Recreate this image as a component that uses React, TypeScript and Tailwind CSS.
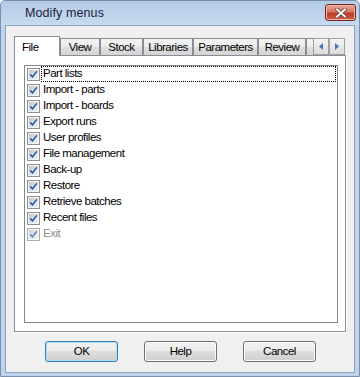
import React from 'react';

// Win7 "basic" style dialog: Modify menus, File tab with a checklist.
const ITEMS = [
  'Part lists',
  'Import - parts',
  'Import - boards',
  'Export runs',
  'User profiles',
  'File management',
  'Back-up',
  'Restore',
  'Retrieve batches',
  'Recent files',
  'Exit',
];

const TABS = [
  { label: 'View', w: 'w-[40px]' },
  { label: 'Stock', w: 'w-[43px]' },
  { label: 'Libraries', w: 'w-[50px]' },
  { label: 'Parameters', w: 'w-[65px]' },
  { label: 'Review', w: 'w-[48px]' },
];

function CheckBox({ disabled }: { disabled?: boolean }) {
  return (
    <svg width="13" height="13" viewBox="0 0 13 13" className={disabled ? 'shrink-0 opacity-75' : 'shrink-0'}>
      <defs>
        <linearGradient id="cbfill" x1="0" y1="0" x2="1" y2="1">
          <stop offset="0" stopColor="#bcc6d2" />
          <stop offset="1" stopColor="#eef1f4" />
        </linearGradient>
      </defs>
      <rect x="0.5" y="0.5" width="12" height="12" fill="#f6f6f6" stroke="#8e8f8f" />
      <rect x="2" y="2" width="9" height="9" fill="url(#cbfill)" />
      <path d="M3.2 6.2 L5.4 8.9 L9.9 3.3" stroke="#f4f6fa" strokeWidth="3" fill="none" strokeLinejoin="round" />
      <path d="M3.2 6.2 L5.4 8.9 L9.9 3.3" stroke="#2f5aa6" strokeWidth="1.7" fill="none" />
    </svg>
  );
}

function Arrow({ dir }: { dir: 'left' | 'right' }) {
  return (
    <svg width="4" height="7" viewBox="0 0 4 7">
      {dir === 'left' ? (
        <path d="M4 0 L0 3.5 L4 7 Z" fill="#4a6fb5" />
      ) : (
        <path d="M0 0 L4 3.5 L0 7 Z" fill="#4a6fb5" />
      )}
    </svg>
  );
}

function Button({ label, primary }: { label: string; primary?: boolean }) {
  return (
    <button
      className={`w-[73px] h-[21px] rounded-[3px] border text-[11.5px] tracking-[-0.5px] text-black bg-[linear-gradient(#f2f2f2_0%,#ebebeb_50%,#dddddd_50%,#cfcfcf_100%)] ${
        primary ? 'border-[#3c7fb1] shadow-[inset_0_0_0_1px_#a6e3f8]' : 'border-[#707070] shadow-[inset_0_0_0_1px_#fbfbfb]'
      }`}
    >
      {label}
    </button>
  );
}

export default function App() {
  return (
    <div
      className="w-[360px] h-[377px] flex flex-col bg-[#bfd4ec] border border-[#7b90aa] rounded-t-[5px] text-[11.5px] text-black"
      style={{ fontFamily: '"Liberation Sans", Arial, sans-serif' }}
    >
      {/* title bar */}
      <div className="h-[24px] shrink-0 flex items-center justify-between pl-[24px] pr-[3px] rounded-t-[5px] bg-[linear-gradient(#b4cbe6,#c6daf0)]">
        <span className="text-[12.5px] text-[#1c1b3a] tracking-[0.1px] pt-[1px]">Modify menus</span>
        <div className="w-[31px] h-[17px] mt-[-1px] rounded-[3px] border border-[#6f2b22] flex items-center justify-center bg-[linear-gradient(#e8a493_0%,#d77762_45%,#c13a25_55%,#cc6147_100%)] shadow-[inset_0_0_0_1px_#eeb3a5]">
          <svg width="12" height="10" viewBox="0 0 12 10">
            <path d="M2 1.5 L10 8.5 M10 1.5 L2 8.5" stroke="#5a3a36" strokeWidth="3.4" strokeLinecap="square" />
            <path d="M2 1.5 L10 8.5 M10 1.5 L2 8.5" stroke="#ffffff" strokeWidth="2" strokeLinecap="square" />
          </svg>
        </div>
      </div>

      {/* client area */}
      <div className="h-[348px] mx-[4px] border border-[#8fa3bc] bg-[#f0f0f0] flex flex-col">
        <div className="pt-[10px] px-[8px] flex flex-col">
          {/* tab strip */}
          <div className="h-[19px] flex items-end tracking-[-0.5px]">
            <div className="relative z-10 w-[46px] h-[20px] -mb-px border border-b-0 border-[#898c95] bg-white pl-[7px] pt-[4px] leading-[12px]">
              File
            </div>
            {TABS.map((t) => (
              <div
                key={t.label}
                className={`${t.w} h-[17px] border border-b-0 border-[#898c95] bg-[linear-gradient(#f3f3f3_0%,#ebebeb_50%,#dedede_50%,#d4d4d4_100%)] flex items-center justify-center pt-[2px]`}
              >
                {t.label}
              </div>
            ))}
            <div className="w-[7px] h-[17px] border-l border-t border-[#898c95] bg-[linear-gradient(#f3f3f3_0%,#ebebeb_50%,#dedede_50%,#d4d4d4_100%)]" />
            <div className="w-[32px] h-[17px] flex bg-[#f4f4f4]">
              <div className="w-[16px] h-[17px] border border-[#a0a0a0] bg-[linear-gradient(#f4f4f4,#dcdcdc)] flex items-center justify-center">
                <Arrow dir="left" />
              </div>
              <div className="w-[16px] h-[17px] border border-[#a0a0a0] bg-[linear-gradient(#f4f4f4,#dcdcdc)] flex items-center justify-center">
                <Arrow dir="right" />
              </div>
            </div>
          </div>

          {/* tab page */}
          <div className="h-[277px] border border-[#898c95] bg-white pl-[9px] pt-[9px] pr-[7px] pb-[8px] shadow-[1px_1px_0_#ffffff]">
            <div className="h-full border border-[#828790] bg-white flex flex-col">
              {ITEMS.map((item, i) => {
                const disabled = item === 'Exit';
                return (
                  <div key={item} className="h-[16px] flex items-center pl-[2px] pr-[1px]">
                    <CheckBox disabled={disabled} />
                    <div
                      className={`flex-1 h-[16px] ml-[1px] pl-[1px] flex items-center tracking-[-0.5px] ${
                        i === 0 ? 'border border-dotted border-black' : 'border border-transparent'
                      } ${disabled ? 'text-[#8d8d8d]' : 'text-black'}`}
                    >
                      {item}
                    </div>
                  </div>
                );
              })}
            </div>
          </div>
        </div>

        {/* buttons */}
        <div className="mt-[9px] pl-[39px] flex gap-[26px]">
          <Button label="OK" primary />
          <Button label="Help" />
          <Button label="Cancel" />
        </div>
      </div>
    </div>
  );
}
